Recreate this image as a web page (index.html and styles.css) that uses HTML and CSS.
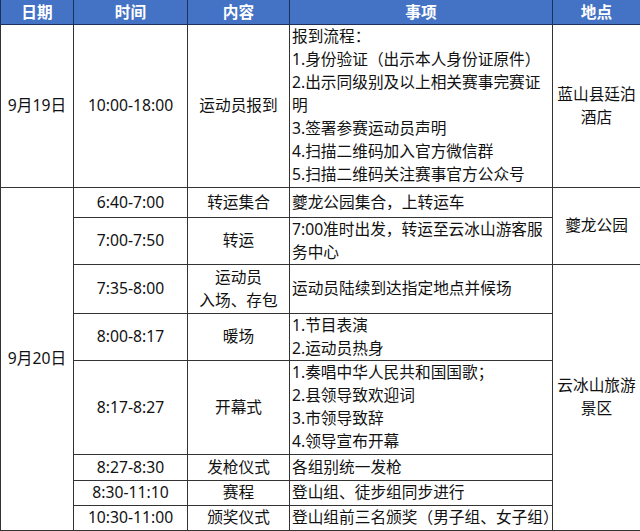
FILE: index.html
```html
<!DOCTYPE html>
<html lang="zh-CN">
<head>
<meta charset="utf-8">
<title>日程安排</title>
<link rel="stylesheet" href="styles.css">
</head>
<body>
<table class="schedule">
  <colgroup>
    <col class="c-date">
    <col class="c-time">
    <col class="c-item">
    <col class="c-detail">
    <col class="c-place">
  </colgroup>
  <thead>
    <tr class="h-head">
      <th>日期</th>
      <th>时间</th>
      <th>内容</th>
      <th>事项</th>
      <th>地点</th>
    </tr>
  </thead>
  <tbody>
    <tr class="h-r1">
      <td>9月19日</td>
      <td>10:00-18:00</td>
      <td>运动员报到</td>
      <td class="detail">报到流程：<br>1.身份验证（出示本人身份证原件）<br>2.出示同级别及以上相关赛事完赛证<br>明<br>3.签署参赛运动员声明<br>4.扫描二维码加入官方微信群<br>5.扫描二维码关注赛事官方公众号</td>
      <td>蓝山县廷泊<br>酒店</td>
    </tr>
    <tr class="h-r2">
      <td rowspan="9">9月20日</td>
      <td>6:40-7:00</td>
      <td>转运集合</td>
      <td class="detail">夔龙公园集合，上转运车</td>
      <td rowspan="2">夔龙公园</td>
    </tr>
    <tr class="h-r3">
      <td>7:00-7:50</td>
      <td>转运</td>
      <td class="detail">7:00准时出发，转运至云冰山游客服<br>务中心</td>
    </tr>
    <tr class="h-r4">
      <td>7:35-8:00</td>
      <td>运动员<br>入场、存包</td>
      <td class="detail">运动员陆续到达指定地点并候场</td>
      <td rowspan="7">云冰山旅游<br>景区</td>
    </tr>
    <tr class="h-r5">
      <td>8:00-8:17</td>
      <td>暖场</td>
      <td class="detail">1.节目表演<br>2.运动员热身</td>
    </tr>
    <tr class="h-r6">
      <td>8:17-8:27</td>
      <td>开幕式</td>
      <td class="detail">1.奏唱中华人民共和国国歌；<br>2.县领导致欢迎词<br>3.市领导致辞<br>4.领导宣布开幕</td>
    </tr>
    <tr class="h-r7">
      <td>8:27-8:30</td>
      <td>发枪仪式</td>
      <td class="detail">各组别统一发枪</td>
    </tr>
    <tr class="h-r8">
      <td>8:30-11:10</td>
      <td>赛程</td>
      <td class="detail">登山组、徒步组同步进行</td>
    </tr>
    <tr class="h-r9">
      <td>10:30-11:00</td>
      <td>颁奖仪式</td>
      <td class="detail">登山组前三名颁奖（男子组、女子组）</td>
    </tr>
  </tbody>
</table>
</body>
</html>
```

FILE: styles.css
```css
html, body {
  margin: 0;
  padding: 0;
  background: #ffffff;
}

.schedule {
  border-collapse: collapse;
  table-layout: fixed;
  width: 640px;
  font-family: "Noto Sans", "Noto Sans CJK SC", sans-serif;
  font-size: 15.7px;
  line-height: 23px;
  color: #111111;
}

.c-date { width: 73px; }
.c-time { width: 114px; }
.c-item { width: 102px; }
.c-detail { width: 263px; }
.c-place { width: 88px; }

.schedule th,
.schedule td {
  border: 1px solid #333333;
  padding: 0 2px;
  text-align: center;
  vertical-align: middle;
  white-space: nowrap;
  overflow: visible;
}

.schedule th {
  background: #4472c4;
  color: #ffffff;
  font-weight: 700;
  border-color: #1f2f55;
  border-top: none;
  line-height: 22px;
}

.schedule td.detail {
  text-align: left;
  padding-left: 2px;
}

.h-head { height: 24px; }
.h-r1 { height: 163px; }
.h-r2 { height: 30px; }
.h-r3 { height: 46px; }
.h-r4 { height: 49px; }
.h-r5 { height: 47px; }
.h-r6 { height: 94px; }
.h-r7 { height: 26px; }
.h-r8 { height: 25px; }
.h-r9 { height: 25px; }
```
